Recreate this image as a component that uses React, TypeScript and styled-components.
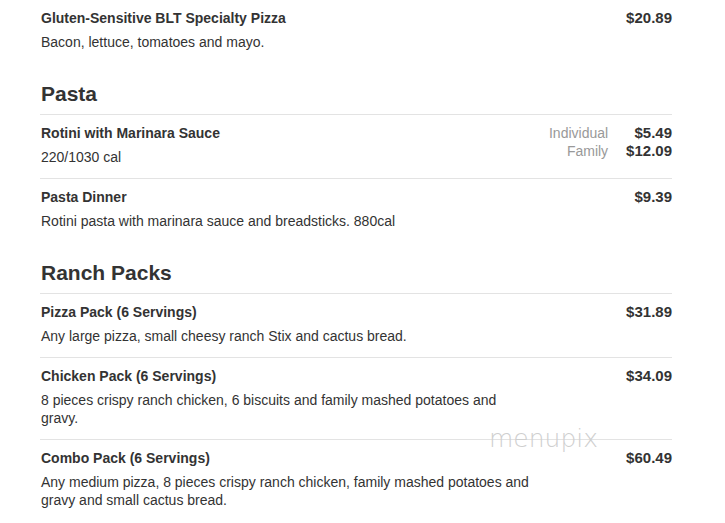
import React from "react";
import styled, { createGlobalStyle } from "styled-components";

const GlobalStyle = createGlobalStyle`
  html, body {
    margin: 0;
    padding: 0;
    background: #ffffff;
  }
  body {
    font-family: "Liberation Sans", Arial, sans-serif;
    color: #333333;
  }
`;

const Page = styled.div`
  position: relative;
  width: 725px;
  height: 523px;
  overflow: hidden;
  background: #ffffff;
`;

const Menu = styled.div`
  width: 632px;
  padding-left: 40px;
`;

const Section = styled.section``;

const SectionTitle = styled.h2`
  margin: 19px 0 0;
  padding: 0 1px 8px;
  font-size: 21px;
  line-height: 24px;
  font-weight: 700;
  color: #333333;
`;

const Item = styled.div<{ $first?: boolean }>`
  display: flex;
  justify-content: space-between;
  align-items: flex-start;
  padding: 9px 0 12px 1px;
  border-top: ${(p) => (p.$first ? "none" : "1px solid #e3e3e3")};
`;

const Info = styled.div`
  width: 490px;
`;

const ItemName = styled.div`
  font-size: 14px;
  line-height: 18px;
  font-weight: 700;
  color: #333333;
`;

const ItemDesc = styled.div`
  margin-top: 6px;
  font-size: 14px;
  line-height: 18px;
  color: #333333;
`;

const PriceGrid = styled.div`
  display: grid;
  grid-template-columns: auto auto;
  column-gap: 18px;
  row-gap: 0;
  justify-items: end;
`;

const SizeLabel = styled.div`
  font-size: 14px;
  line-height: 18px;
  color: #999999;
`;

const Price = styled.div`
  font-size: 15px;
  line-height: 18px;
  font-weight: 700;
  color: #333333;
`;

const Watermark = styled.div`
  position: absolute;
  left: 489px;
  top: 426px;
  font-family: "DejaVu Sans", sans-serif;
  font-weight: 200;
  font-size: 25px;
  line-height: 25px;
  letter-spacing: 0;
  color: #cfcfcf;
  pointer-events: none;
`;

type PriceEntry = { label?: string; value: string };
type MenuItem = { name: string; desc: string; prices: PriceEntry[] };
type MenuSection = { title?: string; items: MenuItem[] };

const data: MenuSection[] = [
  {
    items: [
      {
        name: "Gluten-Sensitive BLT Specialty Pizza",
        desc: "Bacon, lettuce, tomatoes and mayo.",
        prices: [{ value: "$20.89" }],
      },
    ],
  },
  {
    title: "Pasta",
    items: [
      {
        name: "Rotini with Marinara Sauce",
        desc: "220/1030 cal",
        prices: [
          { label: "Individual", value: "$5.49" },
          { label: "Family", value: "$12.09" },
        ],
      },
      {
        name: "Pasta Dinner",
        desc: "Rotini pasta with marinara sauce and breadsticks. 880cal",
        prices: [{ value: "$9.39" }],
      },
    ],
  },
  {
    title: "Ranch Packs",
    items: [
      {
        name: "Pizza Pack (6 Servings)",
        desc: "Any large pizza, small cheesy ranch Stix and cactus bread.",
        prices: [{ value: "$31.89" }],
      },
      {
        name: "Chicken Pack (6 Servings)",
        desc: "8 pieces crispy ranch chicken, 6 biscuits and family mashed potatoes and gravy.",
        prices: [{ value: "$34.09" }],
      },
      {
        name: "Combo Pack (6 Servings)",
        desc: "Any medium pizza, 8 pieces crispy ranch chicken, family mashed potatoes and gravy and small cactus bread.",
        prices: [{ value: "$60.49" }],
      },
    ],
  },
];

function Prices({ prices }: { prices: PriceEntry[] }) {
  return (
    <PriceGrid>
      {prices.map((p, i) => (
        <React.Fragment key={i}>
          <SizeLabel>{p.label ?? ""}</SizeLabel>
          <Price>{p.value}</Price>
        </React.Fragment>
      ))}
    </PriceGrid>
  );
}

export default function App() {
  return (
    <Page>
      <GlobalStyle />
      <Menu>
        {data.map((section, si) => (
          <Section key={si}>
            {section.title && <SectionTitle>{section.title}</SectionTitle>}
            {section.items.map((item, ii) => (
              <Item key={ii} $first={!section.title && ii === 0}>
                <Info>
                  <ItemName>{item.name}</ItemName>
                  <ItemDesc>{item.desc}</ItemDesc>
                </Info>
                <Prices prices={item.prices} />
              </Item>
            ))}
          </Section>
        ))}
      </Menu>
      <Watermark>menupix</Watermark>
    </Page>
  );
}
